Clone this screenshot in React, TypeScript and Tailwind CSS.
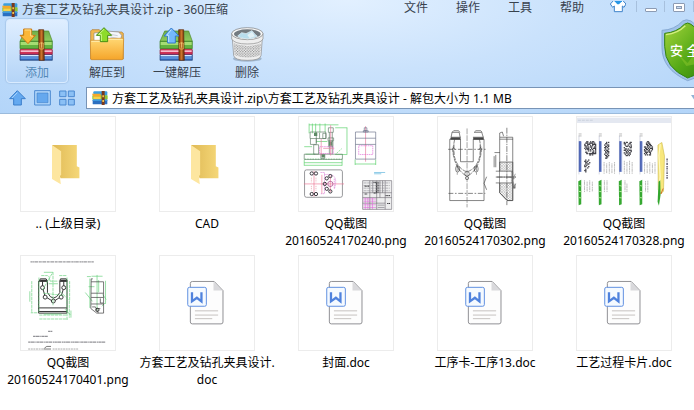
import React from "react";

const cjk = "font-['Noto_Sans','Noto_Sans_CJK_SC',sans-serif]";

function AppIcon() {
  return (
    <svg viewBox="0 0 48 42" className="h-[14px] w-4 shrink-0" aria-hidden="true">
      <rect x="4" y="1" width="42" height="13" rx="3" fill="#3a9fe0" />
      <rect x="1" y="13" width="46" height="13" rx="2" fill="#8cc63a" />
      <path d="M0 8h26v9H4z" fill="#f4a92c" />
      <path d="M4 17h22v8H4z" fill="#f7d24a" />
      <rect x="2" y="26" width="44" height="14" rx="2" fill="#2b6fc0" />
      <path d="M3 25h42v5H3z" fill="#3d9be0" />
      <rect x="29" y="0" width="9" height="42" fill="#7b3a1c" />
      <path d="M31 13h5v6h-5zM31 27h5v6h-5z" fill="#f3c34a" />
    </svg>
  );
}

function Books({ children }: { children: React.ReactNode }) {
  return (
    <svg viewBox="0 0 108 108" className="h-9 w-9" aria-hidden="true">
      <defs>
        <linearGradient id="bookGreen" x1="0" y1="0" x2="0" y2="1">
          <stop offset="0" stopColor="#6fae4a" />
          <stop offset="1" stopColor="#8fcb5c" />
        </linearGradient>
        <linearGradient id="strap" x1="0" y1="0" x2="1" y2="0">
          <stop offset="0" stopColor="#7b3208" />
          <stop offset=".5" stopColor="#c9752c" />
          <stop offset="1" stopColor="#6d2b06" />
        </linearGradient>
      </defs>
      <path d="M3 83l6-5h86l5 5v17H3z" fill="#2f68bd" stroke="#244277" strokeWidth="2" />
      <path d="M5 84h93v4H5z" fill="#d5e9ff" />
      <path d="M5 91h93v4H5z" fill="#6ea3e8" />
      <path d="M3 68l6-5h86l5 5v14H3z" fill="#cf3358" stroke="#861b38" strokeWidth="2" />
      <path d="M5 70h93v5H5z" fill="#f6bccb" />
      <path d="M17 12h72l11 31H3z" fill="url(#bookGreen)" stroke="#4c8a2a" strokeWidth="2" />
      <path d="M3 43h97v22H3z" fill="#62b23f" stroke="#3b7d25" strokeWidth="2" />
      <path d="M5 45h93v9H5z" fill="#a5dc73" />
      <path d="M59 8h15l2 92H60z" fill="url(#strap)" stroke="#5d2908" strokeWidth="2" />
      <path d="M62 48h11v18H62z" fill="none" stroke="#f0c45e" strokeWidth="2" />
      <path d="M68 46v16" stroke="#ffe49b" strokeWidth="2" />
      {children}
    </svg>
  );
}

function AddIcon() {
  return (
    <Books>
      <path d="M14 6h24v19h11L27 50 3 25h11z" fill="#fbb739" stroke="#c77813" strokeWidth="3" strokeLinejoin="round" />
      <path d="M17 9h18v18h7" fill="none" stroke="#ffdf8a" strokeWidth="3" />
    </Books>
  );
}

function OneKeyIcon() {
  return (
    <Books>
      <path d="M26 48V27H15L37 3l23 24H49v21z" fill="#74b9fb" stroke="#3479cb" strokeWidth="3" strokeLinejoin="round" />
      <path d="M29 45V25h-6L37 8" fill="none" stroke="#c3e4ff" strokeWidth="3" />
    </Books>
  );
}

function ExtractIcon() {
  return (
    <svg viewBox="0 0 108 108" className="h-9 w-9" aria-hidden="true">
      <defs>
        <linearGradient id="folderFront" x1="0" y1="0" x2="0" y2="1">
          <stop offset="0" stopColor="#ffd874" />
          <stop offset="1" stopColor="#f5a52a" />
        </linearGradient>
      </defs>
      <path d="M5 96V12l4-4h22l7 7h60l5 4v77z" fill="#f1b84f" stroke="#b0782a" strokeWidth="2" />
      <path d="M15 18l40-4 3 40H15z" fill="#fff" stroke="#8b8b8b" strokeWidth="2" />
      <path d="M53 12l36 3 9 10-7 30H50z" fill="#f4f6fa" stroke="#85878b" strokeWidth="2" />
      <path d="M64 22l22 4M64 30l22 4" stroke="#b3b8c2" strokeWidth="2" />
      <path d="M4 40h32l8-6h60l-2 61q0 3-3 3H8q-3 0-3-3z" fill="url(#folderFront)" stroke="#c9862a" strokeWidth="2" />
      <path d="M7 43h30l8-6h56" fill="none" stroke="#ffedaf" strokeWidth="3" />
      <path d="M34 44V25H22L45 2l23 23H56v19z" fill="#8edb2b" stroke="#478c13" strokeWidth="3" strokeLinejoin="round" />
      <path d="M37 42V22h-8L45 7" fill="none" stroke="#cff78d" strokeWidth="3" />
    </svg>
  );
}

function BinIcon() {
  return (
    <svg viewBox="0 0 108 108" className="h-9 w-9" aria-hidden="true">
      <defs>
        <pattern id="mesh" width="8" height="8" patternUnits="userSpaceOnUse">
          <rect width="8" height="8" fill="#f3f3f3" />
          <circle cx="2" cy="2" r="2" fill="#737373" />
          <circle cx="6" cy="6" r="2" fill="#868686" />
        </pattern>
      </defs>
      <ellipse cx="55" cy="95" rx="43" ry="9" fill="#5f7387" opacity=".4" />
      <path d="M10 34l4 52q3 14 41 14t41-14l4-52z" fill="#eee" stroke="#888" strokeWidth="2" />
      <path d="M14 49q41 16 82 0l-3 36q-38 13-76 0z" fill="url(#mesh)" />
      <path d="M8 20v16q8 15 47 15t47-15V20z" fill="#eee" stroke="#888" strokeWidth="2" />
      <ellipse cx="55" cy="20" rx="47" ry="18" fill="#f8f8f8" stroke="#777" strokeWidth="2" />
      <ellipse cx="55" cy="21" rx="40" ry="14" fill="#737a80" />
      <path d="M26 27l12-10 13 3 18-9 8 10 8 7-18 7q-28 2-41-8z" fill="#b8dded" stroke="#e8f8ff" strokeWidth="2" />
      <path d="M55 24l14-10 9 14-16 6z" fill="#e3f1f6" />
    </svg>
  );
}

const tools = [
  { label: "添加", icon: <AddIcon />, active: true },
  { label: "解压到", icon: <ExtractIcon /> },
  { label: "一键解压", icon: <OneKeyIcon /> },
  { label: "删除", icon: <BinIcon /> },
];

function Shield() {
  return (
    <svg viewBox="0 0 168 189" className="h-[63px] w-14" aria-hidden="true">
      <defs>
        <linearGradient id="shieldFill" x1="0" y1="0" x2="1" y2="1">
          <stop offset="0" stopColor="#a6d53d" />
          <stop offset=".55" stopColor="#55a916" />
          <stop offset="1" stopColor="#2f810d" />
        </linearGradient>
      </defs>
      <path d="M3 34Q40 33 65 6q10-7 25 0 28 28 72 29v53q0 72-82 97Q3 151 3 86z" fill="#9fc2e8" stroke="#86a9d3" strokeWidth="3" />
      <path d="M11 43Q48 40 70 16q10-8 20 0 25 24 65 27v43q0 65-75 91Q11 147 11 82z" fill="url(#shieldFill)" stroke="#348315" strokeWidth="3" />
      <path d="M15 47Q50 43 73 20" fill="none" stroke="#d5ee81" strokeWidth="4" />
      <path d="M50 104l30 28 43-59-8 60-39 8z" fill="#8cc82c" opacity=".5" />
    </svg>
  );
}

function FolderThumb() {
  return (
    <svg viewBox="60 34 288 288" className="h-full w-full" aria-hidden="true">
      <defs>
        <linearGradient id="folderBack">
          <stop offset="0" stopColor="#dfb955" />
          <stop offset="1" stopColor="#f5d778" />
        </linearGradient>
      </defs>
      <path d="M155 120h76v65l8 4v33h-58z" fill="url(#folderBack)" />
      <path d="M155 120l28 19v73l-4 3 3 25-27-16z" fill="#fde6a0" />
    </svg>
  );
}

function DocThumb() {
  return (
    <svg viewBox="88 31 288 288" className="h-full w-full" fill="none" aria-hidden="true">
      <path d="M187 109h67l27 28v96q0 6-6 6h-88q-6 0-6-6V115q0-6 6-6z" fill="#fdfdfd" stroke="#8e8e92" strokeWidth="3" />
      <path d="M252 111v26h27z" fill="#d9d9dc" />
      <path d="M195 199h71M195 212h71M195 223h53" stroke="#aba5a1" strokeWidth="2" />
      <rect x="173" y="127" width="57" height="58" rx="5" fill="#f5faff" stroke="#5d8ee0" strokeWidth="3" />
      <path d="M186 142v28l15-11 14 11v-28" stroke="#4f82dd" strokeWidth="7" />
    </svg>
  );
}

function FixtureThumb() {
  const holes = [[94, 207], [107, 207], [94, 270], [107, 270], [140, 222], [151, 215], [134, 239], [140, 254], [151, 262]];
  return (
    <svg viewBox="55 34 288 288" className="h-full w-full" fill="none" strokeWidth="2" aria-hidden="true">
      <g stroke="#55cf65">
        <path d="M86 58h90M86 54v30M96 54v30M106 54v30M119 54v28M135 54v26M166 67h37M202 67v81M167 149h36M71 166v17M187 166v17M71 174h116M71 182h116M227 164v17M290 164v17M227 178h63M71 125h24M108 109h34M75 148h30" />
        <path d="M166 149l20-18M72 163h115" strokeDasharray="5 3" />
      </g>
      <path d="M71 148h117v16H71zM89 80h48v20H89zM90 100v18h18v-18M108 80v34M118 83v17M128 84h10v16h-10zM145 67h15v14h-15zM148 81v67M157 81v67M144 98h17v9h-17zM146 108h13v17h-13zM100 119h15v29h-15zM122 149h12v12h-12z" stroke="#5c7a64" />
      <path d="M101 82h10v10h-10zM147 110h9v12h-9zM124 150h10v8h-10z" fill="#5d8a66" />
      <path d="M118 125h42v21h-42zM238 122h43v27h-43z" stroke="#e26bd8" strokeDasharray="5 2" />
      <path d="M123 101v51M152 59v93M129 130h34M259 62v109" stroke="#e6779b" />
      <path d="M228 80h62v83h-62zM228 99h62M228 118h62M252 76h15v4h-15zM255 67h8v9h-8z" stroke="#687087" />
      <rect x="72" y="196" width="116" height="84" rx="6" stroke="#636468" />
      <path d="M70 239h123M101 199v79M151 214v50M125 211v58" stroke="#ed7495" />
      <path d="M121 204h12v65h-12M132 211q48-8 31 44M163 223v31" stroke="#d777d1" strokeDasharray="4 2" />
      {holes.map(([x, y]) => <circle key={`${x}-${y}`} cx={x} cy={y} r="5" stroke="#38343c" strokeWidth="3" />)}
      <circle cx="151" cy="239" r="8" stroke="#9d337e" />
      <path d="M93 220v14M107 220v14M93 245v14M107 245v14" stroke="#e08191" strokeDasharray="3 3" />
      <path d="M285 204h34M285 208h22" stroke="#58b2db" />
      <path d="M250 229h89v88h-89z" fill="#eeeeef" />
      <path d="M250 229h89v88h-89zM250 266h89M250 281h89M250 298h69M272 229v88M293 229v88M303 229v52M319 229v88M281 229v37M311 229v37" stroke="#74717a" />
      <path d="M253 236h80M253 244h80M253 252h80M253 260h80" stroke="#94939a" strokeDasharray="9 2" />
      <path d="M256 246h15M283 234h9v33h-9M297 232v34M256 270h8M320 275h15M325 299h10" stroke="#353439" strokeWidth="3" strokeDasharray="4 1" />
      <path d="M252 285h39M252 292h39M252 303h39M252 311h39M258 281v36M266 281v36M280 281v36" stroke="#e070db" />
      <path d="M296 304h21M296 311h21" stroke="#77737e" />
    </svg>
  );
}

function ForkThumb() {
  return (
    <svg viewBox="52 34 288 288" className="h-full w-full" fill="none" stroke="#464646" strokeWidth="2" aria-hidden="true">
      <defs>
        <pattern id="hatch" width="8" height="8" patternUnits="userSpaceOnUse">
          <path d="M0 8L8 0M0 0l8 8" stroke="#777" strokeWidth="1" />
        </pattern>
      </defs>
      <path d="M88 102v188h105V102M88 102h33v69h39v-69h33M91 96h31M159 96h33M95 81h22l3 16H92zM163 81h23l5 16h-31M95 81l5-5h15l4 5M163 81l5-5h15l4 5" />
      <path d="M90 101h31M160 101h32" strokeWidth="5" />
      <path d="M103 102C92 150 108 192 141 202C174 192 190 150 179 102M96 128q5 66 45 88M186 128q-5 66-45 88" strokeDasharray="14 3" />
      <path d="M83 133h116M84 268h113" strokeDasharray="15 5 5 5" />
      <path d="M141 69v242M111 183v28M170 183v28M101 118v32M181 118v32" strokeDasharray="18 3" stroke="#777" />
      <circle cx="141" cy="208" r="7" />
      <circle cx="141" cy="221" r="5" />
      <ellipse cx="112" cy="193" rx="6" ry="10" />
      <ellipse cx="169" cy="193" rx="6" ry="10" />
      <path d="M98 125l7 10M184 125l-7 10M110 182l8 17M171 182l-8 17" />
      <path d="M201 217l-8 20 8 20" />
      <path d="M241 96h40v194h-17l-23-24zM241 96v-13l8-3 4 13M241 102h41" />
      <path d="M241 172h40v118h-17l-23-24z" fill="url(#hatch)" />
      <path d="M241 200h34v36h-34z" fill="#fff" stroke="none" />
      <path d="M229 200h50v36h-50M229 218h62M224 154v34M229 150v38M225 143h17" />
      <path d="M263 67v237M232 218h58" strokeDasharray="18 3 4 3" />
      <path d="M281 203v40M271 218l16 5M289 208l-9 21 9 20M281 251h10" stroke="#777" />
      <path d="M281 238l4 15 5-15" />
    </svg>
  );
}

const marks = [
  { x: 77, y: 108, rows: ["001100101100", "011101111010", "100111001111", "110100101001", "011010110011", "101110010111", "010110101001", "000010100101", "011000001101", "001101111111", "000001101000"] },
  { x: 77, y: 164, rows: ["010010", "110100", "011001", "010110", "101000", "110010", "000100", "010000", "110000", "010000"] },
  { x: 138, y: 110, rows: ["00101", "01100", "10011", "01101", "11010", "01001", "10110", "01011", "01101", "10010", "01101", "00110", "01100"] },
  { x: 198, y: 110, rows: ["10110011", "11000110", "01001001", "00110101", "10000011", "01101000", "11010111", "00101001", "10110110", "01001010", "00110100"] },
  { x: 260, y: 108, rows: ["000110000", "001011000", "001101100", "000110110", "110101001", "011010111", "101101001", "110011010", "011101100", "101000100", "010101100"] },
];

function SheetThumb() {
  const strips = [0, 62, 124, 187];
  return (
    <svg viewBox="55 34 288 288" className="h-full w-full" fill="none" aria-hidden="true">
      <path d="M55 36h288v16H55z" fill="#e4e8f1" />
      <path d="M58 44h46" stroke="#bfc6d2" strokeWidth="2" strokeDasharray="9 3" />
      {strips.map((x) => (
        <g key={x} transform={`translate(${x})`}>
          <path d="M61 91v119" stroke="#d5d8e4" strokeWidth="3" />
          <path d="M64 108v94" stroke="#5067b5" strokeWidth="7" />
          <path d="M68 109v93" stroke="#91a5e1" strokeWidth="2" />
          <path d="M60 86h9M60 92h9" stroke="#999" strokeWidth="2" />
          <path d="M59 231l9-5v75l-8 3z" fill="#36a831" />
          <path d="M61 244l8 2M61 262l8 1M61 281l8 1" stroke="#b5e89f" strokeWidth="3" />
        </g>
      ))}
      {marks.map((m) =>
        m.rows.flatMap((row, r) =>
          [...row].map((c, i) =>
            c === "1" ? <rect key={`${m.x}-${m.y}-${r}-${i}`} x={m.x + i * 3} y={m.y + r * 4} width="4" height="4" fill="#3f3f46" /> : null,
          ),
        ),
      )}
      <path d="M138 172v36M146 176v32M154 172v36M162 176v32M170 172v36M200 168v40M208 172v36M216 168v40M224 172v36M262 172v36M270 176v32M278 172v36M286 176v32M294 172v36M78 228v36M86 232v32M94 228v36M102 232v32M139 228v36M147 228v36M202 228v36M208 238v26M265 230v34M272 229v36" stroke="#bbb" strokeWidth="3" strokeDasharray="4 1 9 2" />
      <path d="M315 112l8 42-3 107-8 9-8-13-1-137z" fill="#f8e77c" stroke="#d0bd52" strokeWidth="2" />
      <path d="M310 117l-4 35 4 65-5 43" stroke="#fff9bd" strokeWidth="4" />
      <path d="M305 232l5-4 1 45-5 33-4-12z" fill="#32a62d" />
      <path d="M312 270l7-17" stroke="#cf742f" strokeWidth="3" />
      <path d="M331 161v63" stroke="#514e61" strokeWidth="4" strokeDasharray="6 3 3 2" />
    </svg>
  );
}

function PageThumb() {
  return (
    <svg viewBox="60 31 288 288" className="h-full w-full" fill="none" stroke="#333" strokeWidth="3" aria-hidden="true">
      <path d="M89 49h194" stroke="#9a9a9e" strokeWidth="4" strokeDasharray="7 1 3 1 11 2" />
      <path d="M114 108h27v35q18 34 38 0v-35h22v98h-87zM114 190h87M114 201h87M119 101h18l4 7h-25zM181 101h18l3 7h-23z" />
      <path d="M119 106h20M181 106h20" strokeWidth="5" />
      <path d="M126 108v20l8 27 25 16 24-16 8-27v-20" />
      {[[126, 128], [134, 157], [159, 169], [183, 157], [191, 128]].map(([x, y]) => <circle key={x} cx={x} cy={y} r="6" fill="white" />)}
      <g stroke="#62cf79" strokeWidth="2">
        <path d="M158 80v102M93 108v97M110 205H90M122 91h20M177 91h23M115 97v108M201 97v130M116 224h86M116 212h85M149 108h25M155 85l-30 52M129 145l60 7M208 168v52M149 108l-4-16M180 140l27 26M209 108v61" strokeDasharray="10 2" />
        <path d="M130 81h28M145 116h28M130 209h54M87 139v32M195 194l16 17M213 198v22M271 100v90M293 89v109M319 107v71M276 93h34M262 94h12M298 105v37M257 143l22 27M267 125h18M310 149l11 15M308 185l9-10" />
      </g>
      <path d="M275 110h38v96h-21l-18-14zM275 110v-9h5M275 145h37M275 158h37M275 178h37M303 161v14h9M278 187h10l9 19M290 192h13" strokeWidth="2" />
      <circle cx="294" cy="196" r="5" />
      <path d="M143 262h13M97 277h45M82 295h237" stroke="#929297" strokeWidth="4" strokeDasharray="7 1 12 2 4 1" />
      <path d="M82 316h47M157 316h78" stroke="#aaa" strokeWidth="3" strokeDasharray="6 2" />
      <path d="M132 313l7-5h13M129 316h23" strokeWidth="2" />
    </svg>
  );
}

const files = [
  { name: ".. (上级目录)", thumb: <FolderThumb /> },
  { name: "CAD", thumb: <FolderThumb /> },
  { name: "QQ截图 20160524170240.png", thumb: <FixtureThumb /> },
  { name: "QQ截图 20160524170302.png", thumb: <ForkThumb /> },
  { name: "QQ截图 20160524170328.png", thumb: <SheetThumb /> },
  { name: "QQ截图 20160524170401.png", thumb: <PageThumb /> },
  { name: "方套工艺及钻孔夹具设计.\u200bdoc", thumb: <DocThumb /> },
  { name: "封面.doc", thumb: <DocThumb /> },
  { name: "工序卡-工序13.doc", thumb: <DocThumb /> },
  { name: "工艺过程卡片.doc", thumb: <DocThumb /> },
];

function TitleBar() {
  return (
    <div className="flex h-[18px] items-center">
      <div className="flex flex-1 items-center gap-1 pl-0.5">
        <AppIcon />
        <h1 className="text-xs leading-4 text-[#38424e]">方套工艺及钻孔夹具设计.zip - 360压缩</h1>
      </div>
      <nav className="flex gap-7 self-start pr-[26px] text-[#38424e]">
        {["文件", "操作", "工具", "帮助"].map((m) => (
          <button key={m} type="button" className="text-xs leading-[14px]">{m}</button>
        ))}
      </nav>
      <button type="button" aria-label="换肤" className="h-4 w-4 self-start">
        <svg viewBox="0 8 48 48" className="h-4 w-4" aria-hidden="true">
          <path d="M13 4L1 17l7 10 5-4v17h24V23l5 4 6-10L36 4q-11 12-23 0z" fill="#fff" stroke="#3e83ca" strokeWidth="3" strokeLinejoin="round" />
          <path d="M14 0h22v9l-9 9h-5l-8-9z" fill="#2896e5" />
        </svg>
      </button>
      <div className="ml-2.5 flex h-[11px] self-start">
        <button type="button" aria-label="最小化" className="flex h-[11px] w-7 items-end justify-center border-l border-[#a7c0dd]">
          <span className="h-[4px] w-3 rounded-[1px] border border-[#8c9bb3] bg-white" />
        </button>
        <button type="button" aria-label="还原" className="flex h-[11px] w-[30px] items-end justify-center border-x border-[#a7c0dd]">
          <span className="flex h-[9px] w-3 rounded-[1px] border border-[#8c9bb3] bg-white p-0.5">
            <span className="flex-1 border border-[#8c9bb3] bg-[#c9dcf3]" />
          </span>
        </button>
      </div>
    </div>
  );
}

function Toolbar() {
  return (
    <div className="flex h-[68px] items-start">
      <div className="flex flex-1 gap-2 pl-1.5">
        {tools.map((t) => (
          <button
            key={t.label}
            type="button"
            className={`flex h-16 w-[62px] flex-col items-center gap-0.5 rounded border pt-[7px] text-xs leading-4 whitespace-nowrap ${
              t.active
                ? "border-[#d9ebff] bg-linear-to-b from-[#dfeeff] to-[#b4d4f7] text-[#5489b7] shadow-[0_0_1px_1px_#a9c9ec]"
                : "border-transparent text-[#38424e]"
            }`}
          >
            {t.icon}
            <span>{t.label}</span>
          </button>
        ))}
      </div>
      <button type="button" className="relative -mr-[23px] h-[63px] w-14">
        <Shield />
        <span className="absolute top-[23px] left-[9px] text-[13px] leading-4 font-medium whitespace-nowrap text-white">安 全</span>
      </button>
    </div>
  );
}

function AddressRow() {
  return (
    <div className="flex h-[22px] items-center pl-[9px]">
      <div className="flex w-[77px] items-center gap-2">
        <button type="button" aria-label="向上">
          <svg viewBox="0 0 51 48" className="h-4 w-[17px]" aria-hidden="true">
            <path d="M25 2l24 24H37v19H14V26H2z" fill="#64a9f0" stroke="#3b7ecb" strokeWidth="3" strokeLinejoin="round" />
            <path d="M9 24L25 8" stroke="#a5d1fb" strokeWidth="3" />
          </svg>
        </button>
        <button type="button" aria-label="缩略图">
          <svg viewBox="0 0 51 48" className="h-4 w-[17px]" aria-hidden="true">
            <path d="M2 2h47v43H2z" fill="#b1d7fb" stroke="#4b89d0" strokeWidth="3" />
            <path d="M9 9h33v29H9z" fill="#65a8ee" stroke="#4383cc" strokeWidth="2" />
          </svg>
        </button>
        <button type="button" aria-label="图标">
          <svg viewBox="0 0 48 48" className="h-4 w-4" aria-hidden="true">
            <path d="M2 3h19v17H2zM28 3h18v17H28zM2 28h19v17H2zM28 28h18v17H28z" fill="#8bc0f5" stroke="#4b89d0" strokeWidth="3" />
          </svg>
        </button>
      </div>
      <div className="-mr-1.5 flex h-[22px] flex-1 items-center gap-1 border border-[#7894b6] bg-white pl-[5px]">
        <AppIcon />
        <input
          aria-label="路径"
          defaultValue={"方套工艺及钻孔夹具设计.zip\\方套工艺及钻孔夹具设计 - 解包大小为 1.1 MB"}
          className="h-5 min-w-0 flex-1 bg-transparent text-xs text-black outline-none"
        />
        <button type="button" aria-label="展开">
          <svg viewBox="0 0 8 6" className="h-1.5 w-2" aria-hidden="true">
            <path d="M0 0h8L4 6z" fill="#8fb2d6" />
          </svg>
        </button>
      </div>
    </div>
  );
}

export default function App() {
  return (
    <div className={`min-h-screen overflow-hidden bg-white ${cjk}`}>
      <header className="overflow-hidden border-b border-[#9bbbdc] bg-[radial-gradient(ellipse_at_50%_0%,#e2f0ff_0%,#cae2fc_45%,#b3d5f9_100%)] pt-px pb-1">
        <TitleBar />
        <Toolbar />
        <AddressRow />
      </header>
      <main>
        <ul className="grid auto-rows-[133px] grid-cols-[repeat(auto-fill,128px)] gap-x-[11px] gap-y-1.5 pt-0.5 pl-1">
          {files.map((f) => (
            <li key={f.name}>
              <button type="button" className="flex w-32 flex-col items-center gap-[3px]">
                <span className="h-24 w-24 border border-[#ececec]">{f.thumb}</span>
                <span className="-mx-1 w-[136px] text-center text-xs leading-[17px] text-black">{f.name}</span>
              </button>
            </li>
          ))}
        </ul>
      </main>
    </div>
  );
}
